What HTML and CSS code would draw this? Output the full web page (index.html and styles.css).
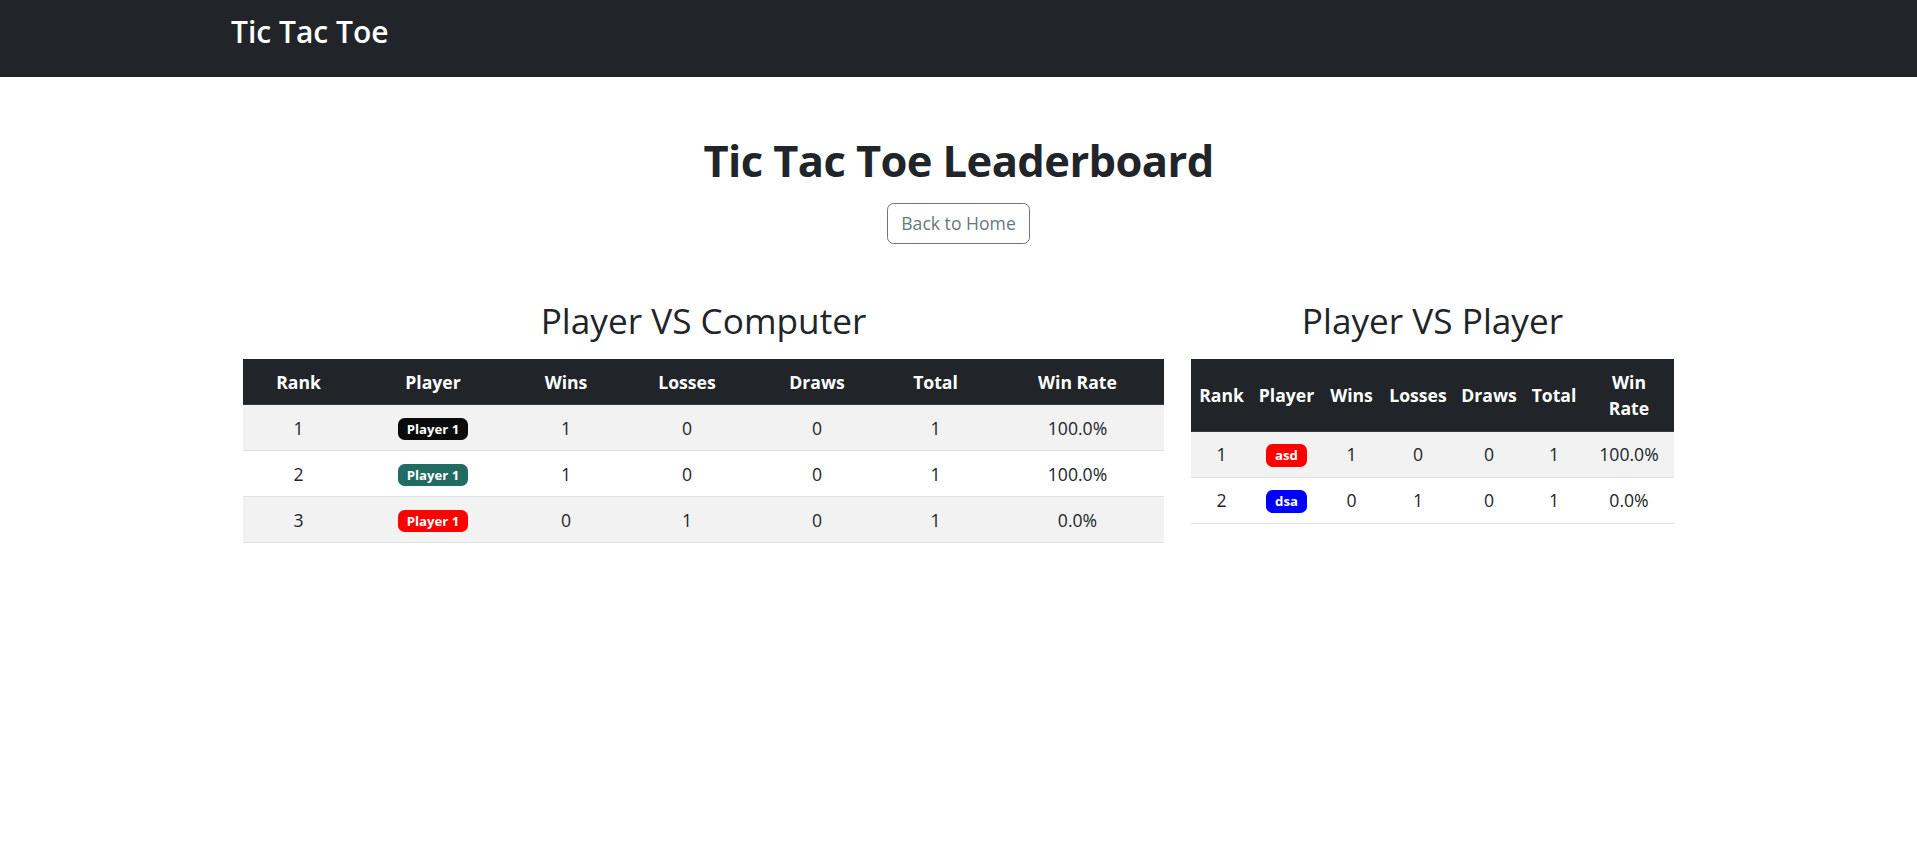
FILE: index.html
```html
<!DOCTYPE html>
<html lang="en">
<head>
<meta charset="utf-8">
<title>Tic Tac Toe Leaderboard</title>
<link rel="stylesheet" href="styles.css">
</head>
<body>
<nav class="navbar">
  <a class="brand" href="#">Tic Tac Toe</a>
</nav>
<main class="main">
  <h1 class="title">Tic Tac Toe Leaderboard</h1>
  <div class="actions">
    <a class="btn-outline" href="#">Back to Home</a>
  </div>
  <div class="boards">
    <section class="board board-pvc">
      <h2 class="board-title">Player VS Computer</h2>
      <table class="lb-table lb-wide">
        <thead>
          <tr>
            <th class="c-rank">Rank</th>
            <th class="c-player">Player</th>
            <th class="c-wins">Wins</th>
            <th class="c-losses">Losses</th>
            <th class="c-draws">Draws</th>
            <th class="c-total">Total</th>
            <th class="c-rate">Win Rate</th>
          </tr>
        </thead>
        <tbody>
          <tr class="odd">
            <td>1</td><td><span class="badge badge-black">Player 1</span></td><td>1</td><td>0</td><td>0</td><td>1</td><td>100.0%</td>
          </tr>
          <tr>
            <td>2</td><td><span class="badge badge-teal">Player 1</span></td><td>1</td><td>0</td><td>0</td><td>1</td><td>100.0%</td>
          </tr>
          <tr class="odd">
            <td>3</td><td><span class="badge badge-red">Player 1</span></td><td>0</td><td>1</td><td>0</td><td>1</td><td>0.0%</td>
          </tr>
        </tbody>
      </table>
    </section>
    <section class="board board-pvp">
      <h2 class="board-title">Player VS Player</h2>
      <table class="lb-table lb-narrow">
        <thead>
          <tr>
            <th class="c-rank">Rank</th>
            <th class="c-player">Player</th>
            <th class="c-wins">Wins</th>
            <th class="c-losses">Losses</th>
            <th class="c-draws">Draws</th>
            <th class="c-total">Total</th>
            <th class="c-rate">Win Rate</th>
          </tr>
        </thead>
        <tbody>
          <tr class="odd">
            <td>1</td><td><span class="badge badge-red">asd</span></td><td>1</td><td>0</td><td>0</td><td>1</td><td>100.0%</td>
          </tr>
          <tr>
            <td>2</td><td><span class="badge badge-blue">dsa</span></td><td>0</td><td>1</td><td>0</td><td>1</td><td>0.0%</td>
          </tr>
        </tbody>
      </table>
    </section>
  </div>
</main>
</body>
</html>
```

FILE: styles.css
```css
* {
  box-sizing: border-box;
}

html, body {
  margin: 0;
  padding: 0;
  background: #ffffff;
  color: #212529;
  font-family: "Open Sans", "Noto Sans", "DejaVu Sans", sans-serif;
  font-size: 17.6px;
  line-height: 1.5;
}

.navbar {
  height: 77px;
  background: #212529;
  padding: 9px 0 0 231px;
  display: flex;
  align-items: flex-start;
}

.brand {
  color: #ffffff;
  text-decoration: none;
  font-size: 30px;
  line-height: 45px;
  font-weight: 600;
}

.main {
  padding-top: 58px;
}

.title {
  margin: 0 0 15px;
  text-align: center;
  font-size: 43.5px;
  letter-spacing: -0.6px;
  line-height: 52.8px;
  font-weight: 700;
  color: #212529;
}

.actions {
  display: flex;
  justify-content: center;
}

.btn-outline {
  display: inline-block;
  padding: 6.6px 13px;
  border: 1px solid #6c757d;
  border-radius: 6.6px;
  color: #6c757d;
  text-decoration: none;
  font-size: 17.6px;
  line-height: 26.4px;
}

.boards {
  width: 1431px;
  margin: 55px auto 0;
  display: flex;
  gap: 27px;
  align-items: flex-start;
}

.board-pvc {
  flex: 0 0 921px;
}

.board-pvp {
  flex: 0 0 483px;
}

.board-title {
  margin: 0 0 17.6px;
  text-align: center;
  font-size: 35.2px;
  line-height: 1.2;
  font-weight: 500;
  color: #212529;
}

.lb-table {
  width: 100%;
  border-collapse: collapse;
  table-layout: fixed;
  text-align: center;
}

.lb-table th,
.lb-table td {
  padding: 9.3px 8.8px;
  line-height: 26.4px;
  vertical-align: middle;
  border-bottom: 1px solid #dee2e6;
}

.lb-table th {
  background: #212529;
  color: #ffffff;
  font-weight: 700;
  border-bottom-color: #373b3e;
}

.lb-table td {
  color: #212529;
}

.lb-table tr.odd td {
  background: #f2f2f2;
}

.lb-wide .c-rank { width: 111px; }
.lb-wide .c-player { width: 158px; }
.lb-wide .c-wins { width: 108px; }
.lb-wide .c-losses { width: 134px; }
.lb-wide .c-draws { width: 126px; }
.lb-wide .c-total { width: 111px; }
.lb-wide .c-rate { width: 173px; }

.lb-narrow th,
.lb-narrow td {
  padding-left: 6px;
  padding-right: 6px;
}

.lb-narrow .c-rank { width: 61px; }
.lb-narrow .c-player { width: 69px; }
.lb-narrow .c-wins { width: 61px; }
.lb-narrow .c-losses { width: 72px; }
.lb-narrow .c-draws { width: 70px; }
.lb-narrow .c-total { width: 60px; }
.lb-narrow .c-rate { width: 90px; padding-left: 14px; padding-right: 14px; }

.badge {
  display: inline-block;
  padding: 4.6px 8.6px;
  border-radius: 6.6px;
  color: #ffffff;
  font-size: 13.2px;
  font-weight: 700;
  line-height: 1;
  vertical-align: 1px;
  white-space: nowrap;
}

.badge-black { background: #0b0b0b; }
.badge-teal { background: #216b63; }
.badge-red { background: #ff0000; }
.badge-blue { background: #0000ff; }
```
